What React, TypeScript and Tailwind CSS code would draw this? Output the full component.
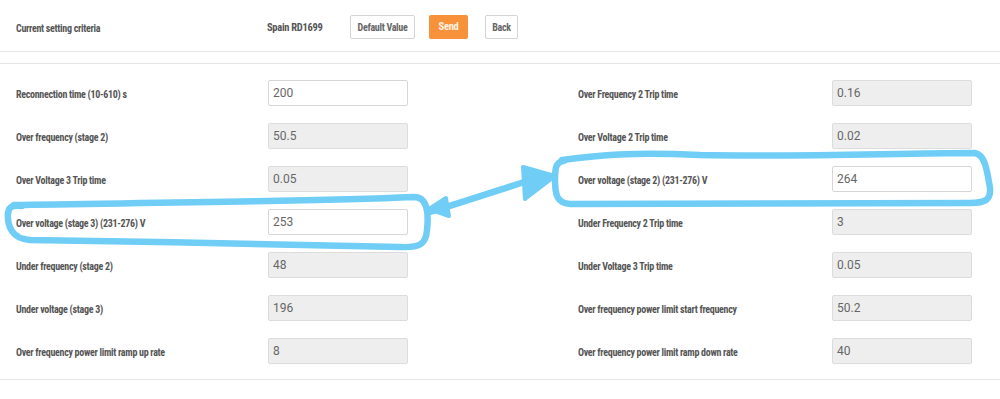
import React from 'react';

type Field = { label: string; value: string; editable?: boolean };

const leftFields: Field[] = [
  { label: 'Reconnection time (10-610) s', value: '200', editable: true },
  { label: 'Over frequency (stage 2)', value: '50.5' },
  { label: 'Over Voltage 3 Trip time', value: '0.05' },
  { label: 'Over voltage (stage 3) (231-276) V', value: '253', editable: true },
  { label: 'Under frequency (stage 2)', value: '48' },
  { label: 'Under voltage (stage 3)', value: '196' },
  { label: 'Over frequency power limit ramp up rate', value: '8' },
];

const rightFields: Field[] = [
  { label: 'Over Frequency 2 Trip time', value: '0.16' },
  { label: 'Over Voltage 2 Trip time', value: '0.02' },
  { label: 'Over voltage (stage 2) (231-276) V', value: '264', editable: true },
  { label: 'Under Frequency 2 Trip time', value: '3' },
  { label: 'Under Voltage 3 Trip time', value: '0.05' },
  { label: 'Over frequency power limit start frequency', value: '50.2' },
  { label: 'Over frequency power limit ramp down rate', value: '40' },
];

const condensed =
  "font-['Roboto_Condensed','Liberation_Sans_Narrow','DejaVu_Sans_Condensed',Roboto,sans-serif] [font-stretch:condensed] tracking-[-0.3px]";

function Row({ field, labelWidth }: { field: Field; labelWidth: string }) {
  return (
    <div className="flex h-[26px] items-center">
      <div className={`${labelWidth} shrink-0 pt-[2px] text-[10px] font-bold text-[#555] ${condensed}`}>
        {field.label}
      </div>
      <div
        className={`flex h-[26px] w-[140px] items-center rounded-[2px] border px-[4px] text-[12px] text-[#666] font-['Roboto',sans-serif] ${
          field.editable ? 'border-[#d6d6d6] bg-white' : 'border-[#dcdcdc] bg-[#eeeeee]'
        }`}
      >
        {field.value}
      </div>
    </div>
  );
}

function Annotations() {
  const blue = '#6fcdf6';
  return (
    <svg
      className="pointer-events-none absolute left-0 top-0"
      width="1000"
      height="399"
      viewBox="0 0 1000 399"
      fill="none"
    >
      <g stroke={blue} strokeWidth="6.5" strokeLinecap="round" strokeLinejoin="round">
        <path d="M14 205 C 120 203, 300 202, 414 197 C 427 197, 429 212, 427 230 C 426 244, 420 248, 400 247 C 300 244, 150 242, 30 240 C 12 239, 7 226, 8 213 C 9 206, 13 205, 22 206" />
        <path d="M430 212 C 470 200, 505 188, 540 177" />
        <path d="M562 160 C 600 155, 630 152, 700 155 C 800 157, 900 153, 975 153 C 985 155, 987 170, 990 188 C 991 200, 985 203, 970 203 C 800 204, 650 204, 570 204 C 557 203, 555 195, 555 180 C 555 166, 556 162, 566 160" />
      </g>
      <g fill={blue} stroke={blue} strokeWidth="4" strokeLinejoin="round">
        <polygon points="429,209 446,198 449,216" />
        <polygon points="523,167 555,176 525,199" />
      </g>
    </svg>
  );
}

export default function App() {
  return (
    <div className="relative h-[399px] w-[1000px] overflow-hidden bg-white">
      <div className="flex h-[52px] items-start border-b border-[#e6e6e6] pl-4 pt-[15px]">
        <div className={`flex h-[24px] w-[251px] items-center pt-[3px] text-[10px] font-bold text-[#555] ${condensed}`}>
          Current setting criteria
        </div>
        <div className={`flex h-[24px] w-[68px] items-center pt-[1px] text-[10.5px] font-bold text-[#555] ${condensed}`}>
          Spain RD1699
        </div>
        <button className={`ml-[15px] h-[24px] w-[65px] rounded-[2px] border border-[#d4d4d4] bg-white text-[10px] font-bold text-[#666] ${condensed}`}>
          Default Value
        </button>
        <button className={`ml-[14px] h-[24px] w-[39px] rounded-[2px] bg-[#f7923a] text-[10.5px] font-bold text-[#fff3e6] ${condensed}`}>
          Send
        </button>
        <button className={`ml-[17px] h-[24px] w-[33px] rounded-[2px] border border-[#d4d4d4] bg-white text-[10px] font-bold text-[#666] ${condensed}`}>
          Back
        </button>
      </div>
      <div className="mt-[11px] flex border-y border-[#e6e6e6] pt-[16px] pb-[15px]">
        <div className="flex w-[500px] flex-col gap-[17px] pl-4">
          {leftFields.map((f) => (
            <Row key={f.label} field={f} labelWidth="w-[252px]" />
          ))}
        </div>
        <div className="flex w-[500px] flex-col gap-[17px] pl-[78px]">
          {rightFields.map((f) => (
            <Row key={f.label} field={f} labelWidth="w-[254px]" />
          ))}
        </div>
      </div>
      <Annotations />
    </div>
  );
}
